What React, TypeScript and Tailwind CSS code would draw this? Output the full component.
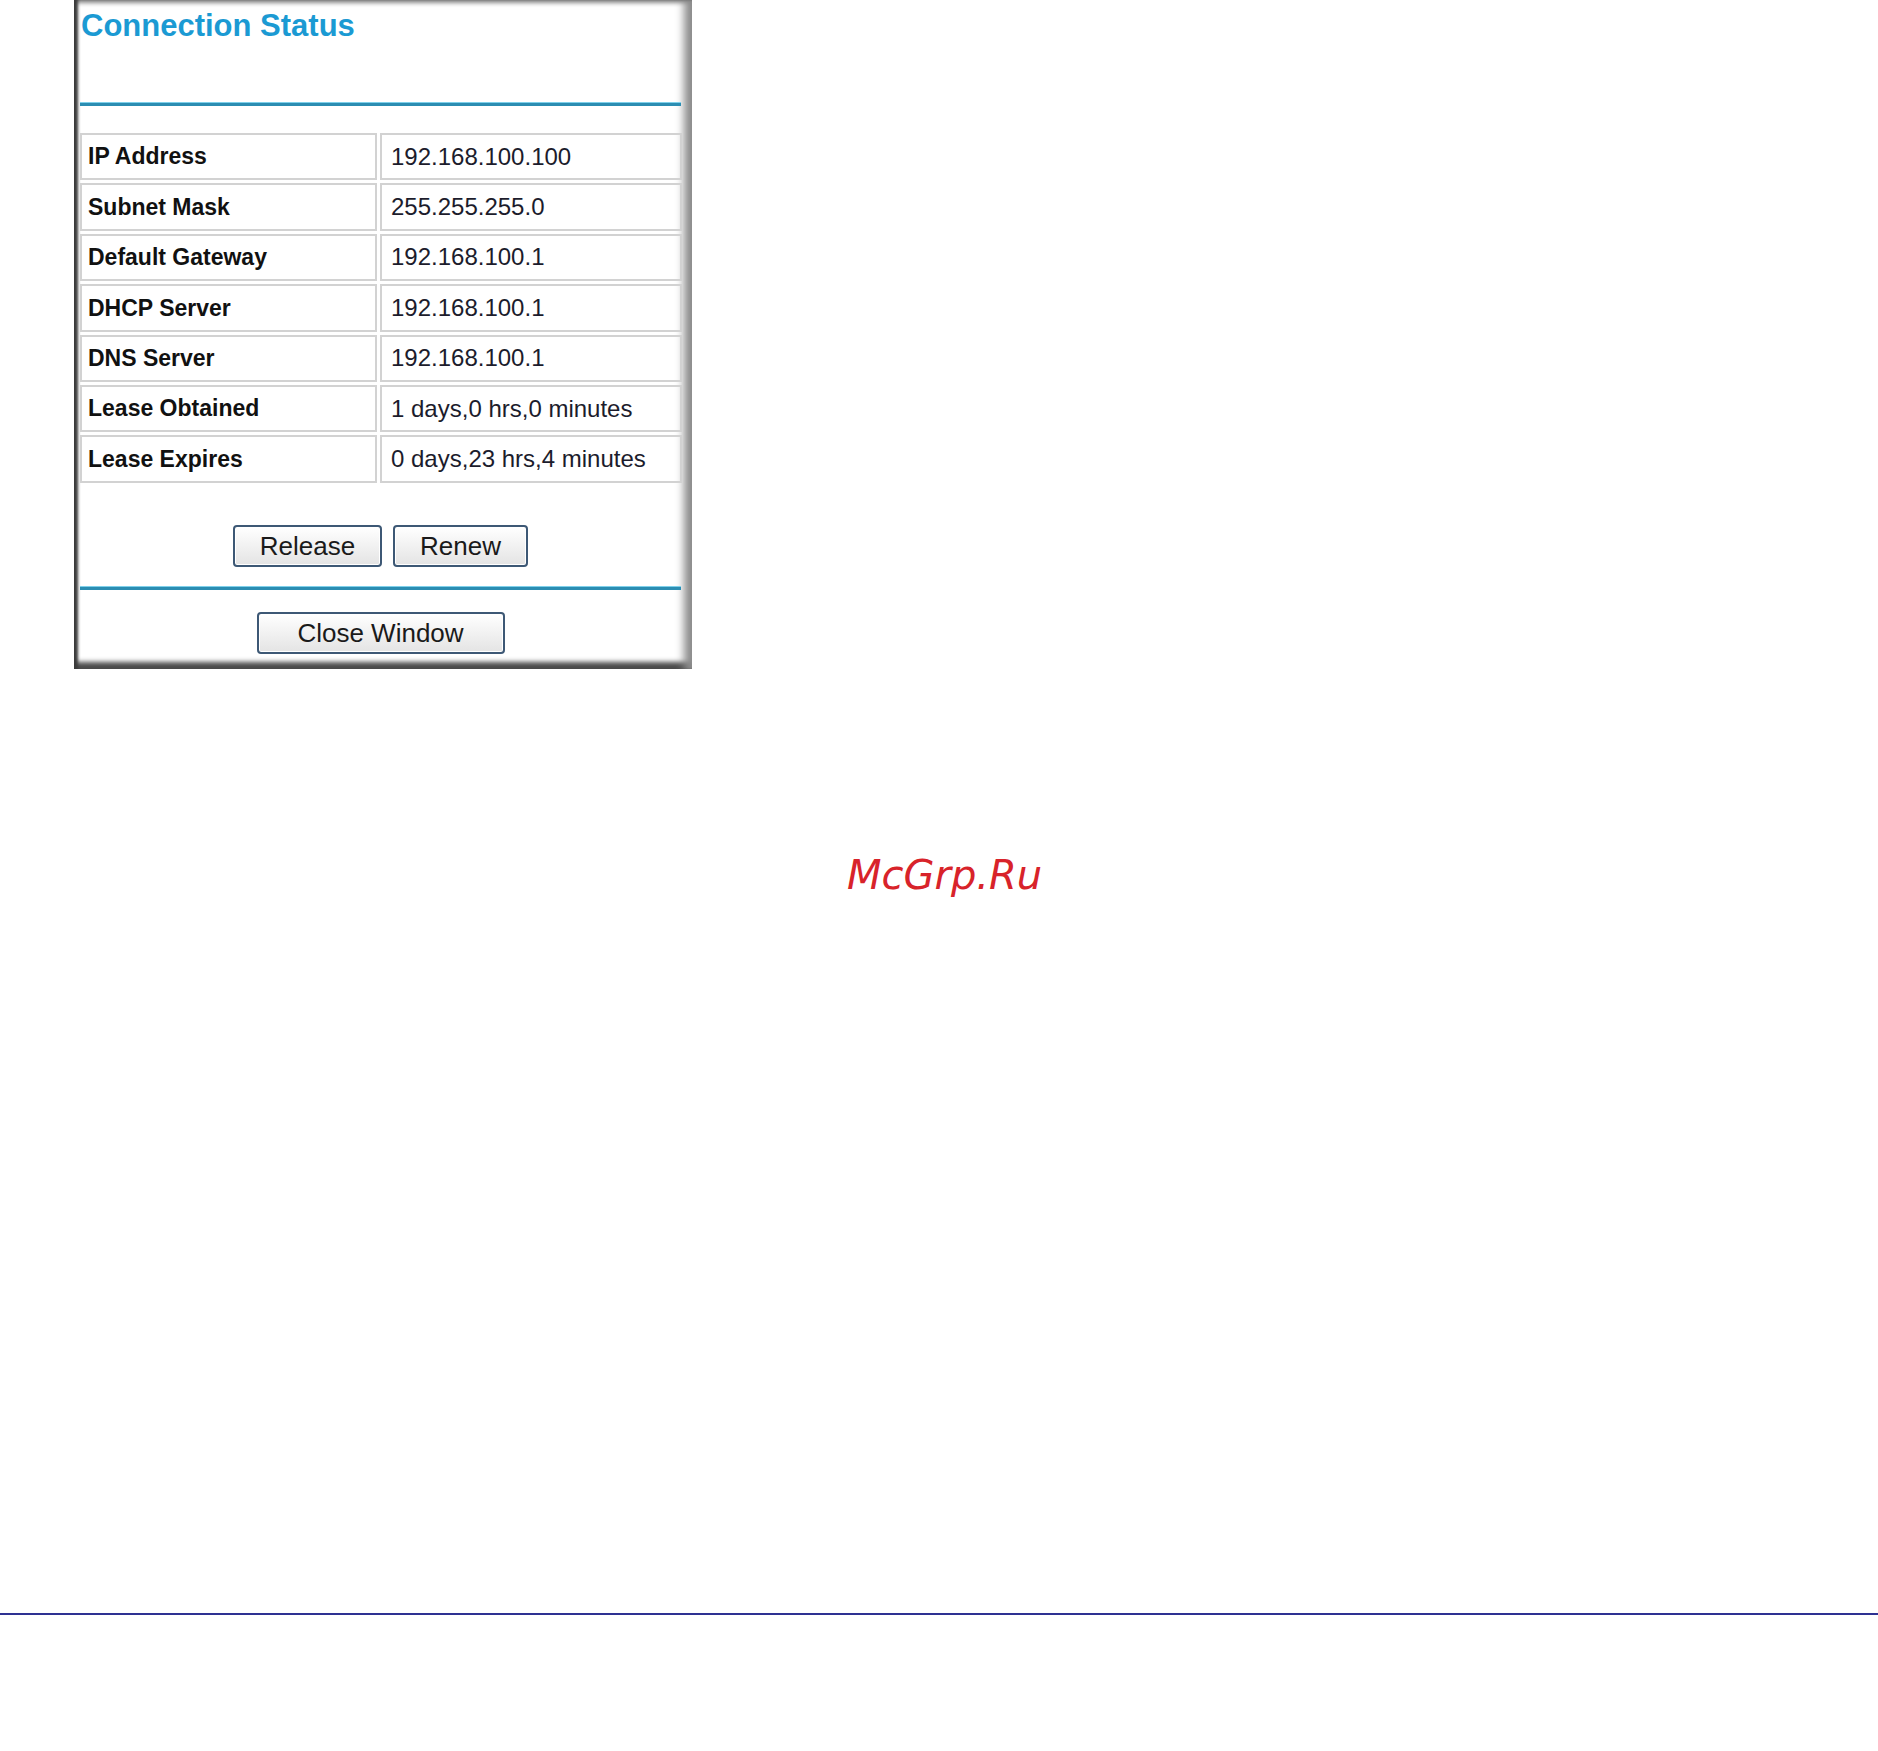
import React from 'react';

const rows = [
  { label: 'IP Address', value: '192.168.100.100' },
  { label: 'Subnet Mask', value: '255.255.255.0' },
  { label: 'Default Gateway', value: '192.168.100.1' },
  { label: 'DHCP Server', value: '192.168.100.1' },
  { label: 'DNS Server', value: '192.168.100.1' },
  { label: 'Lease Obtained', value: '1 days,0 hrs,0 minutes' },
  { label: 'Lease Expires', value: '0 days,23 hrs,4 minutes' },
];

function WinButton({ label, width }: { label: string; width: string }) {
  return (
    <button
      type="button"
      className={`${width} h-[42px] rounded-[4px] border-2 border-[#3d5875] bg-gradient-to-b from-[#ffffff] to-[#e4e4e4] text-[26px] leading-none text-[#1a1a1a] shadow-[inset_0_0_0_1px_#ffffff]`}
    >
      {label}
    </button>
  );
}

export default function App() {
  return (
    <div className="h-[1751px] bg-white font-['Liberation_Sans',Arial,sans-serif]">
      {/* Connection Status window */}
      <div className="ml-[74px] w-[618px] h-[669px] bg-white pl-[6px] pr-[11px] pb-[7px] flex flex-col shadow-[inset_5px_0_3px_-1px_#3a3a3a,inset_-14px_0_8px_-6px_#8c8c8c,inset_0_-9px_5px_-2px_#4a4a4a,inset_0_5px_4px_-2px_#8a8a8a]">
        <div className="h-[102px] pt-[8px] pl-[1px]">
          <h1 className="text-[31px] leading-[36px] font-bold text-[#1b9ad3]">Connection Status</h1>
        </div>
        <div className="h-[4px] bg-[#2b8db2] border-t border-[#7fd0ea]" />

        <div className="mt-[27px] grid grid-cols-[297px_302px] gap-[3px]">
          {rows.map((r) => (
            <React.Fragment key={r.label}>
              <div className="h-[47.4px] flex items-center border-2 border-[#d2d2d2] pl-[6px] text-[23px] font-bold text-[#111111]">
                {r.label}
              </div>
              <div className="h-[47.4px] flex items-center border-2 border-[#d2d2d2] pl-[9px] text-[24px] text-[#1c1c2c]">
                {r.value}
              </div>
            </React.Fragment>
          ))}
        </div>

        <div className="mt-[42px] flex justify-center gap-[11px]">
          <WinButton label="Release" width="w-[149px]" />
          <WinButton label="Renew" width="w-[135px]" />
        </div>

        <div className="mt-[19px] h-[4px] bg-[#2b8db2] border-t border-[#7fd0ea]" />

        <div className="mt-[22px] flex justify-center">
          <WinButton label="Close Window" width="w-[248px]" />
        </div>
      </div>

      {/* watermark */}
      <div className="mt-[186px] pl-[847px] text-[40px] leading-[40px] italic text-[#d8232a] font-['DejaVu_Sans',sans-serif]">
        McGrp.Ru
      </div>

      <div className="mt-[718px] h-[2px] bg-[#2e3192]" />
    </div>
  );
}
